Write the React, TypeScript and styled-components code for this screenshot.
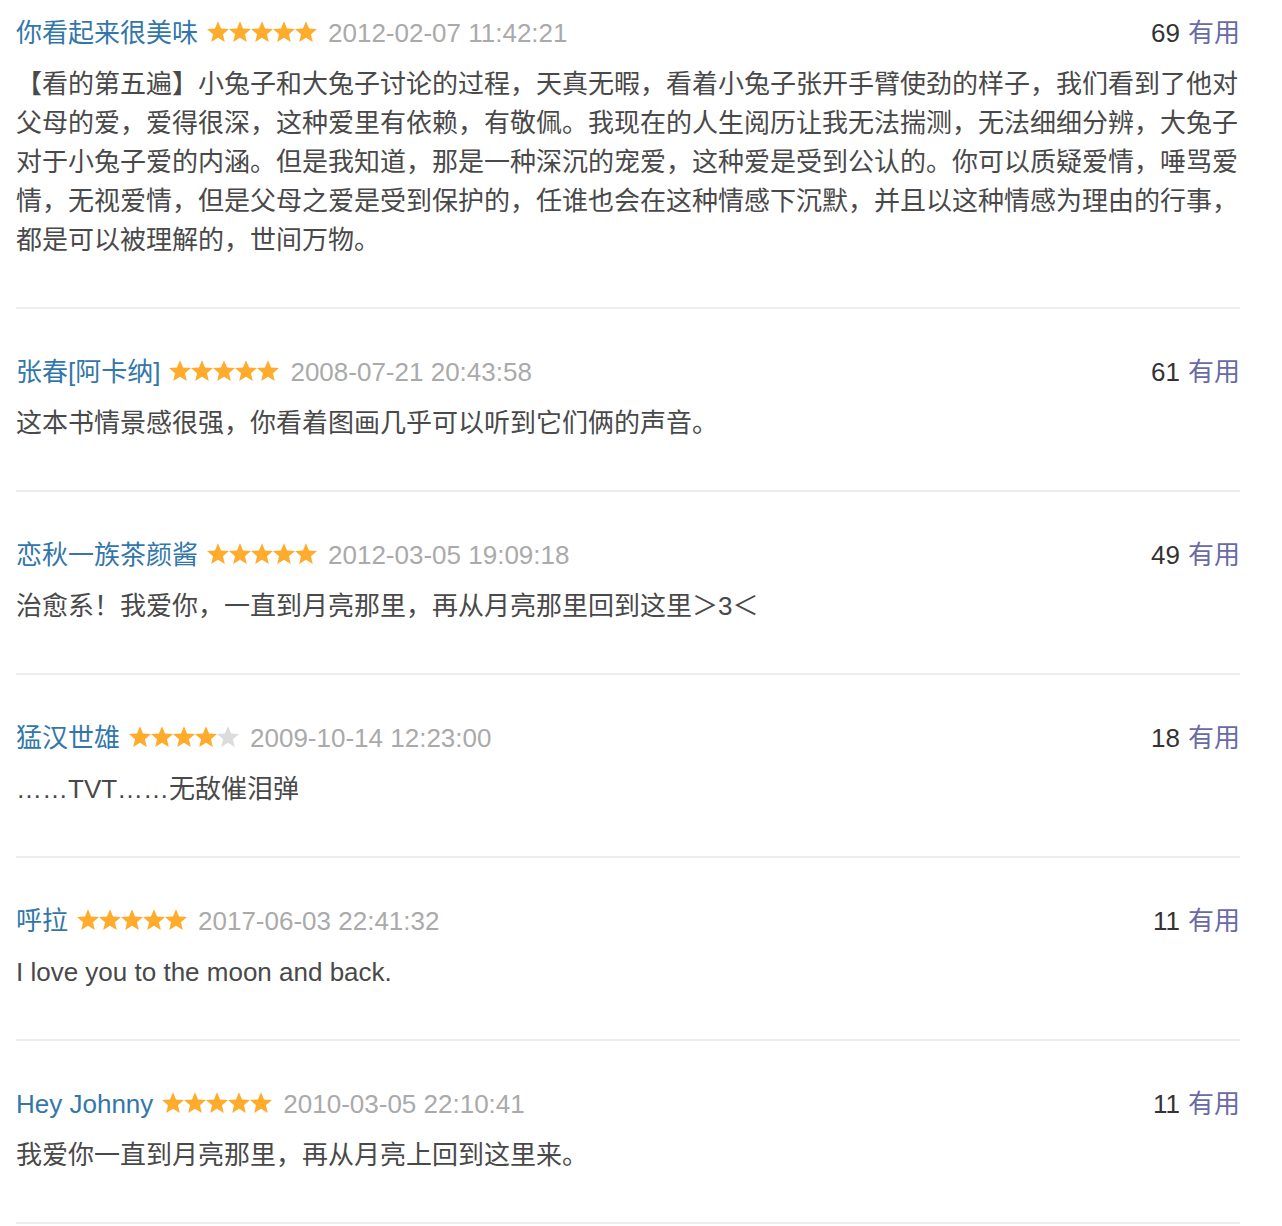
import React from "react";
import styled, { createGlobalStyle } from "styled-components";

const GlobalStyle = createGlobalStyle`
  html, body {
    margin: 0;
    padding: 0;
    background: #fff;
  }
  body {
    font-family: "Liberation Sans", "Noto Sans CJK SC", sans-serif;
  }
`;

const Page = styled.div`
  width: 1224px;
  padding-left: 16px;
`;

const List = styled.ul`
  list-style: none;
  margin: 0;
  padding: 0;
`;

const Item = styled.li`
  padding: 44px 0 47px;
  border-bottom: 2px solid #ededed;
  &:first-child {
    padding-top: 14px;
  }
`;

const Header = styled.div`
  display: flex;
  align-items: center;
  height: 39px;
  font-size: 26px;
  line-height: 39px;
`;

const Meta = styled.div`
  display: flex;
  align-items: center;
  flex: 1;
  min-width: 0;
`;

const Name = styled.a`
  color: #3377aa;
  text-decoration: none;
  white-space: nowrap;
`;

const Stars = styled.span`
  display: inline-flex;
  margin-left: 9px;
  margin-top: -3px;
`;

const DateText = styled.span`
  color: #aaaaaa;
  margin-left: 11px;
  white-space: nowrap;
`;

const Votes = styled.div`
  display: flex;
  align-items: center;
  white-space: nowrap;
`;

const Count = styled.span`
  color: #333333;
`;

const Useful = styled.a`
  color: #6a6aa6;
  text-decoration: none;
  margin-left: 8px;
`;

const Body = styled.p`
  margin: 12px 0 0;
  font-size: 26px;
  line-height: 39px;
  color: #494949;
  word-break: break-all;
`;

const Star: React.FC<{ on: boolean }> = ({ on }) => (
  <svg width="22" height="22" viewBox="0 0 22 22" aria-hidden="true">
    <polygon
      points="11,0.2 14.06,7.39 22,8.02 15.95,13.21 17.8,20.96 11,16.8 4.2,20.96 6.05,13.21 0,8.02 7.94,7.39"
      fill={on ? "#ffac2d" : "#dcdcdc"}
    />
  </svg>
);

type Review = {
  name: string;
  rating: number;
  date: string;
  votes: number;
  text: string;
};

const reviews: Review[] = [
  {
    name: "你看起来很美味",
    rating: 5,
    date: "2012-02-07 11:42:21",
    votes: 69,
    text:
      "【看的第五遍】小兔子和大兔子讨论的过程，天真无暇，看着小兔子张开手臂使劲的样子，我们看到了他对父母的爱，爱得很深，这种爱里有依赖，有敬佩。我现在的人生阅历让我无法揣测，无法细细分辨，大兔子对于小兔子爱的内涵。但是我知道，那是一种深沉的宠爱，这种爱是受到公认的。你可以质疑爱情，唾骂爱情，无视爱情，但是父母之爱是受到保护的，任谁也会在这种情感下沉默，并且以这种情感为理由的行事，都是可以被理解的，世间万物。",
  },
  {
    name: "张春[阿卡纳]",
    rating: 5,
    date: "2008-07-21 20:43:58",
    votes: 61,
    text: "这本书情景感很强，你看着图画几乎可以听到它们俩的声音。",
  },
  {
    name: "恋秋一族茶颜酱",
    rating: 5,
    date: "2012-03-05 19:09:18",
    votes: 49,
    text: "治愈系！我爱你，一直到月亮那里，再从月亮那里回到这里＞3＜",
  },
  {
    name: "猛汉世雄",
    rating: 4,
    date: "2009-10-14 12:23:00",
    votes: 18,
    text: "……TVT……无敌催泪弹",
  },
  {
    name: "呼拉",
    rating: 5,
    date: "2017-06-03 22:41:32",
    votes: 11,
    text: "I love you to the moon and back.",
  },
  {
    name: "Hey Johnny",
    rating: 5,
    date: "2010-03-05 22:10:41",
    votes: 11,
    text: "我爱你一直到月亮那里，再从月亮上回到这里来。",
  },
];

export default function App() {
  return (
    <>
      <GlobalStyle />
      <Page>
        <List>
          {reviews.map((r) => (
            <Item key={r.name}>
              <Header>
                <Meta>
                  <Name href="#">{r.name}</Name>
                  <Stars>
                    {[0, 1, 2, 3, 4].map((i) => (
                      <Star key={i} on={i < r.rating} />
                    ))}
                  </Stars>
                  <DateText>{r.date}</DateText>
                </Meta>
                <Votes>
                  <Count>{r.votes}</Count>
                  <Useful href="#">有用</Useful>
                </Votes>
              </Header>
              <Body>{r.text}</Body>
            </Item>
          ))}
        </List>
      </Page>
    </>
  );
}
